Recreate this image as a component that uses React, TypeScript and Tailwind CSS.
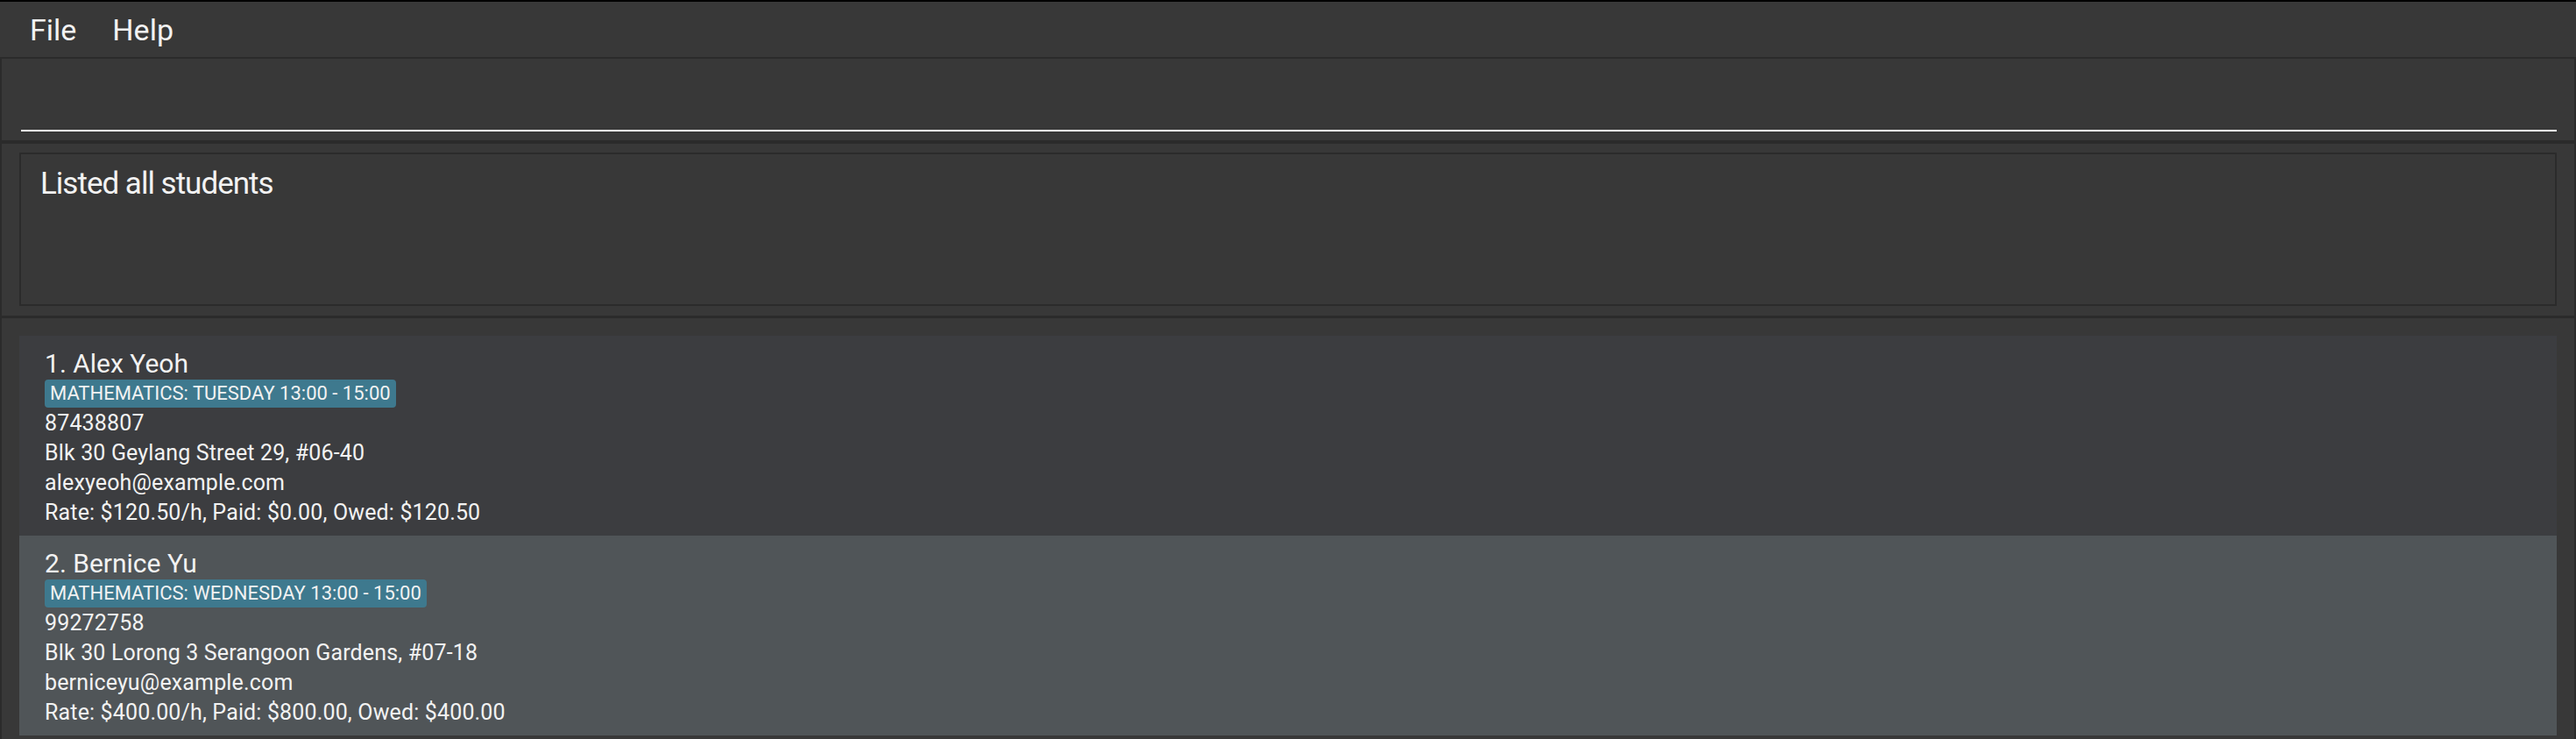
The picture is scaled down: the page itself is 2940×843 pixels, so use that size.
import React from "react";

const students = [
  {
    id: 1,
    name: "Alex Yeoh",
    lesson: "MATHEMATICS: TUESDAY 13:00 - 15:00",
    phone: "87438807",
    address: "Blk 30 Geylang Street 29, #06-40",
    email: "alexyeoh@example.com",
    fees: "Rate: $120.50/h, Paid: $0.00, Owed: $120.50",
  },
  {
    id: 2,
    name: "Bernice Yu",
    lesson: "MATHEMATICS: WEDNESDAY 13:00 - 15:00",
    phone: "99272758",
    address: "Blk 30 Lorong 3 Serangoon Gardens, #07-18",
    email: "berniceyu@example.com",
    fees: "Rate: $400.00/h, Paid: $800.00, Owed: $400.00",
  },
];

function StudentCard({ s, index }: { s: (typeof students)[0]; index: number }) {
  const bg = index % 2 === 0 ? "bg-[#3c3d40]" : "bg-[#505558]";
  return (
    <div className={`${bg} h-[228px] pl-[29px] pt-[13px] text-[#f2f2f2]`}>
      <div className="text-[30px] leading-[37px]">
        {index + 1}. {s.name}
      </div>
      <div className="flex">
        <span className="h-[32px] rounded-[4px] bg-[#3e798e] px-[6px] text-[22px] leading-[32px]">
          {s.lesson}
        </span>
      </div>
      <div className="mt-px text-[25px] leading-[33.9px] tracking-[0.15px]">
        <div>{s.phone}</div>
        <div>{s.address}</div>
        <div>{s.email}</div>
        <div>{s.fees}</div>
      </div>
    </div>
  );
}

export default function App() {
  return (
    <div className="flex h-[843px] w-full flex-col overflow-hidden border-t-2 border-black bg-[#383838] font-['Roboto',sans-serif] text-[#f2f2f2]">
      {/* menu bar */}
      <div className="flex h-[63px] shrink-0 gap-[41px] pl-[34px] pt-[2px] text-[34px] leading-[61px]">
        <span>File</span>
        <span>Help</span>
      </div>
      <div className="h-[2px] shrink-0 bg-[#2b2b2b]" />

      {/* command box */}
      <div className="flex h-[93px] shrink-0 items-end border-x-2 border-[#2b2b2b] pb-[10px] pl-[22px] pr-[20px]">
        <div className="h-[40px] w-full border-b-2 border-white" />
      </div>
      <div className="h-[4px] shrink-0 bg-[#2b2b2b]" />

      {/* result display */}
      <div className="h-[196px] shrink-0 border-x-2 border-[#2b2b2b] px-[20px] pb-[11px] pt-[10px]">
        <div className="h-full border-2 border-[#2b2b2b] pl-[22px] pt-[13px] text-[35px] leading-[41px] tracking-[-1px]">
          Listed all students
        </div>
      </div>
      <div className="h-[3px] shrink-0 bg-[#2b2b2b]" />

      {/* student list */}
      <div className="flex-1 border-x-2 border-[#2b2b2b] px-[20px] pt-[20px]">
        {students.map((s, i) => (
          <StudentCard key={s.id} s={s} index={i} />
        ))}
      </div>
    </div>
  );
}
